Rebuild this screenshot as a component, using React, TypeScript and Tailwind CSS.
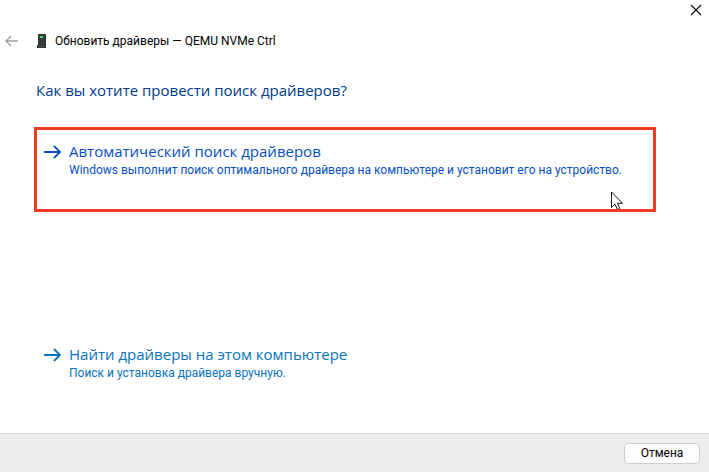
function LinkArrow() {
  return (
    <svg className="mt-2 h-4 w-5 shrink-0" viewBox="0 0 20 16" fill="none" stroke="currentColor" strokeWidth="1.8">
      <path d="M1 8h16.5M11 2l6 6-6 6" />
    </svg>
  );
}

function CommandLink({ title, text, className }: { title: string; text: string; className: string }) {
  return (
    <button type="button" className={`flex w-full items-start gap-1.5 px-1.5 text-left ${className}`}>
      <LinkArrow />
      <span className="flex flex-col">
        <span className="text-[15px] leading-[30px]">{title}</span>
        <span className="-mt-1 font-['Roboto','Noto_Sans',sans-serif] text-[12px] leading-4">{text}</span>
      </span>
    </button>
  );
}

export default function App() {
  return (
    <div className="flex min-h-screen flex-col bg-white font-['Open_Sans','Noto_Sans',sans-serif] text-black">
      <div className="flex h-5 justify-end pr-[7px]">
        <button type="button" aria-label="Закрыть" className="flex h-5 w-3 items-center justify-center">
          <svg className="h-3 w-3" viewBox="0 0 12 12" fill="none" stroke="#111" strokeWidth="1.2">
            <path d="M1 1l10 10M11 1L1 11" />
          </svg>
        </button>
      </div>

      <header className="flex h-[42px] items-center pl-[5px]">
        <button type="button" aria-label="Назад" className="mr-4 text-[#a3a3a3]">
          <svg className="h-3 w-3.5" viewBox="0 0 14 12" fill="none" stroke="currentColor" strokeWidth="1.5">
            <path d="M13 6H1M6 1L1 6l5 5" />
          </svg>
        </button>
        <svg className="mr-2 h-4 w-3" viewBox="0 0 12 16">
          <path d="M3 1h8v12H3z" fill="#333a38" />
          <path d="M2 12h9v3H2z" fill="#343434" />
          <path d="M3 13h7v1H3z" fill="#555" />
          <path d="M5 3h3v2H5z" fill="#35dc70" />
        </svg>
        <span className="font-['Roboto','Noto_Sans',sans-serif] text-[12px] leading-4">Обновить драйверы — QEMU NVMe Ctrl</span>
      </header>

      <main className="flex-1 pr-[53px] pb-11 pl-[34px]">
        <h1 className="mt-[18px] pl-0.5 text-[15px] leading-5 text-[#003a87]">Как вы хотите провести поиск драйверов?</h1>

        <div className="relative mt-[27px] h-[85px] border-3 border-[#ee3b24] pt-1.5">
          <CommandLink
            title="Автоматический поиск драйверов"
            text="Windows выполнит поиск оптимального драйвера на компьютере и установит его на устройство."
            className="text-[#0550c0]"
          />
          <svg className="absolute right-[29px] bottom-0 h-[18px] w-3.5" viewBox="0 0 14 18">
            <path d="M1.5 1v15.5l3.5-3.4 2.4 5.4 2.4-1-2.3-5.2h5z" fill="#fff" stroke="#111" />
          </svg>
        </div>

        <div className="mt-[127px] px-[3px]">
          <CommandLink
            title="Найти драйверы на этом компьютере"
            text="Поиск и установка драйвера вручную."
            className="text-[#0873be]"
          />
        </div>
      </main>

      <footer className="flex h-[39px] items-center justify-end border-t border-[#dcdcdc] bg-[#eeeeee] pr-[9px]">
        <button type="button" className="h-[21px] w-[76px] rounded border border-[#cfcfcf] bg-[#fdfdfd] font-['Roboto','Noto_Sans',sans-serif] text-[12px] leading-4">
          Отмена
        </button>
      </footer>
    </div>
  );
}
